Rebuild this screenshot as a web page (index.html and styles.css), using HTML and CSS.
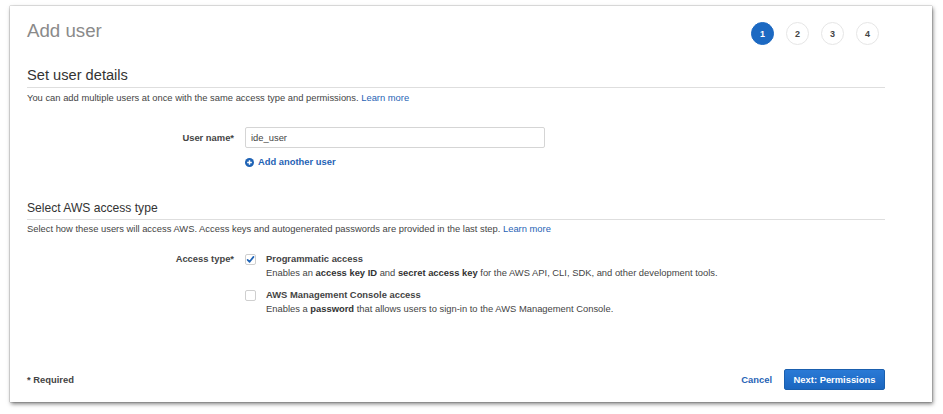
FILE: index.html
```html
<!DOCTYPE html>
<html lang="en">
<head>
<meta charset="utf-8">
<title>Add user</title>
<link rel="stylesheet" href="styles.css">
</head>
<body>
<div class="card">
  <div class="header">
    <h1 class="title">Add user</h1>
    <ol class="steps">
      <li class="step active">1</li>
      <li class="step">2</li>
      <li class="step">3</li>
      <li class="step">4</li>
    </ol>
  </div>

  <h2 class="heading-lg">Set user details</h2>
  <p class="desc">You can add multiple users at once with the same access type and permissions. <a class="link" href="#">Learn more</a></p>

  <div class="row row-user">
    <div class="label">User name*</div>
    <div class="control">
      <div class="input">ide_user</div>
      <a class="add-link" href="#">
        <svg class="plus" viewBox="0 0 10 10" width="9" height="9"><circle cx="5" cy="5" r="5" fill="#1f63b5"/><path d="M5 2.4v5.2M2.4 5h5.2" stroke="#fff" stroke-width="1.6"/></svg>
        <span>Add another user</span>
      </a>
    </div>
  </div>

  <h2 class="heading-sm">Select AWS access type</h2>
  <p class="desc desc2">Select how these users will access AWS. Access keys and autogenerated passwords are provided in the last step. <a class="link" href="#">Learn more</a></p>

  <div class="row row-access">
    <div class="label label-access">Access type*</div>
    <div class="control">
      <div class="option">
        <span class="checkbox">
          <svg viewBox="0 0 11 11" width="11" height="11"><path d="M2.6 5.8l2 2 3.9-4.9" fill="none" stroke="#1f63b5" stroke-width="1.7" stroke-linecap="round" stroke-linejoin="round"/></svg>
        </span>
        <div class="option-text">
          <div class="option-title">Programmatic access</div>
          <div class="option-desc">Enables an <b>access key ID</b> and <b>secret access key</b> for the AWS API, CLI, SDK, and other development tools.</div>
        </div>
      </div>
      <div class="option option2">
        <span class="checkbox"></span>
        <div class="option-text">
          <div class="option-title">AWS Management Console access</div>
          <div class="option-desc">Enables a <b>password</b> that allows users to sign-in to the AWS Management Console.</div>
        </div>
      </div>
    </div>
  </div>

  <div class="footer">
    <div class="required">* Required</div>
    <div class="actions">
      <a class="cancel" href="#">Cancel</a>
      <button class="btn-primary" type="button">Next: Permissions</button>
    </div>
  </div>
</div>
</body>
</html>
```

FILE: styles.css
```css
* { box-sizing: border-box; }
html, body { margin: 0; padding: 0; background: #fff; }
body {
  font-family: "Liberation Sans", Arial, Helvetica, sans-serif;
  color: #444;
  font-size: 9.4px;
  width: 943px;
  height: 414px;
  overflow: hidden;
}
.card {
  margin: 6px 0 0 10px;
  width: 922px;
  height: 396px;
  background: #fff;
  box-shadow: 0 0 1px rgba(0,0,0,0.6), 1px 2px 4px rgba(0,0,0,0.5);
  padding: 13px 47px 12px 17px;
  display: flex;
  flex-direction: column;
}
.header {
  display: flex;
  justify-content: space-between;
  align-items: flex-start;
}
.title {
  margin: 1px 0 0;
  font-size: 18.7px;
  line-height: 22px;
  font-weight: normal;
  color: #8a8a8a;
}
.steps {
  list-style: none;
  margin: 3px 6px 0 0;
  padding: 0;
  display: flex;
  gap: 12px;
}
.step {
  width: 23px;
  height: 23px;
  border-radius: 50%;
  border: 1px solid #e6e6e6;
  display: flex;
  align-items: center;
  justify-content: center;
  font-weight: bold;
  font-size: 9px;
  color: #444;
  background: #fff;
}
.step.active {
  background: #1c69c2;
  border-color: #1c69c2;
  color: #fff;
}
.heading-lg {
  margin: 21px 0 0;
  font-size: 14.65px;
  line-height: 18px;
  font-weight: normal;
  color: #333;
  padding-bottom: 3px;
  border-bottom: 1px solid #dedede;
}
.heading-sm {
  margin: 33px 0 0;
  font-size: 12.1px;
  line-height: 14px;
  font-weight: normal;
  color: #333;
  padding-bottom: 4px;
  border-bottom: 1px solid #dedede;
}
.desc {
  margin: 4px 0 0;
  line-height: 12px;
  color: #444;
}
.desc2 { margin-top: 3px; }
.link { color: #1f63b5; text-decoration: none; }
.row {
  display: grid;
  grid-template-columns: 207px 1fr;
  column-gap: 11px;
}
.row-user { margin-top: 23px; }
.row-access { margin-top: 17px; }
.label {
  text-align: right;
  font-weight: bold;
  color: #444;
  line-height: 21px;
}
.label-access { line-height: 14px; }
.control { display: flex; flex-direction: column; align-items: flex-start; }
.input {
  width: 300px;
  height: 21px;
  border: 1px solid #d5d5d5;
  border-radius: 2px;
  padding: 0 5px;
  line-height: 19px;
  color: #444;
}
.add-link {
  margin-top: 8px;
  display: flex;
  align-items: center;
  gap: 4px;
  line-height: 12px;
  font-weight: bold;
  color: #1f63b5;
  text-decoration: none;
}
.plus { display: block; }
.option { display: flex; gap: 10px; }
.option2 { margin-top: 8px; }
.checkbox {
  flex: none;
  width: 11px;
  height: 11px;
  margin-top: 1.5px;
  border: 1px solid #cfcfcf;
  border-radius: 2px;
  background: #fff;
  position: relative;
}
.checkbox svg { position: absolute; left: -1px; top: -1px; }
.option-title { font-weight: bold; line-height: 14px; color: #444; }
.option-desc { line-height: 14px; color: #444; }
.option-desc b { color: #333; }
.footer {
  margin-top: auto;
  display: flex;
  justify-content: space-between;
  align-items: center;
  height: 21px;
}
.required { font-weight: bold; color: #444; }
.actions { display: flex; align-items: center; gap: 12px; }
.cancel { color: #1f63b5; font-weight: bold; text-decoration: none; }
.btn-primary {
  font-family: inherit;
  font-size: 9.4px;
  font-weight: bold;
  color: #fff;
  height: 21px;
  width: 101px;
  padding: 0;
  border: 1px solid #1a5fae;
  border-radius: 2px;
  background: linear-gradient(#2a7ad6, #1b66bf);
}
```
